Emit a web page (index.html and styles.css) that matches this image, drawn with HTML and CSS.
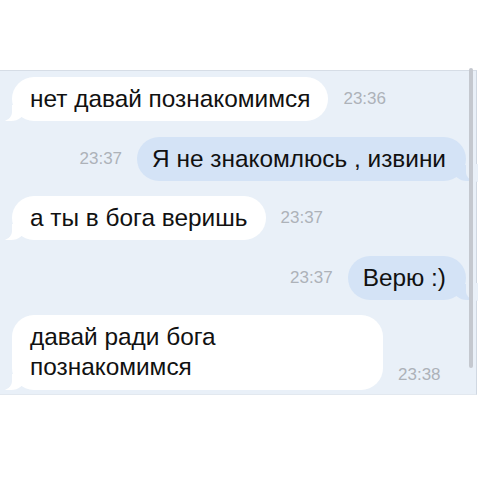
FILE: index.html
```html
<!DOCTYPE html>
<html lang="ru">
<head>
<meta charset="utf-8">
<link rel="stylesheet" href="styles.css">
</head>
<body>
<div class="page">
  <div class="panel">
    <div class="row in">
      <div class="bubble white">нет давай познакомимся</div>
      <span class="time">23:36</span>
    </div>
    <div class="row out">
      <span class="time">23:37</span>
      <div class="bubble blue">Я не знакомлюсь , извини</div>
    </div>
    <div class="row in">
      <div class="bubble white">а ты в бога веришь</div>
      <span class="time">23:37</span>
    </div>
    <div class="row out">
      <span class="time">23:37</span>
      <div class="bubble blue">Верю :)</div>
    </div>
    <div class="row in multi">
      <div class="bubble white wide">давай ради бога<br>познакомимся</div>
      <span class="time low">23:38</span>
    </div>
    <div class="scrollbar"></div>
  </div>
</div>
</body>
</html>
```
FILE: styles.css
```css
html, body {
  margin: 0;
  padding: 0;
  background: #ffffff;
}
body {
  font-family: "Liberation Sans", Arial, sans-serif;
  width: 480px;
  height: 480px;
  overflow: hidden;
}
.page {
  padding-top: 70px;
}
.panel {
  position: relative;
  width: 477px;
  height: 325px;
  box-sizing: border-box;
  background: #e9f0f8;
  border-top: 1px solid #d6dde6;
  border-right: 1px solid #d0d8e2;
  border-bottom: 1px solid #e2e8ef;
  padding: 6px 10px 0 12px;
  display: flex;
  flex-direction: column;
  gap: 15.5px;
}
.row {
  display: flex;
  align-items: center;
  gap: 15px;
}
.row.out {
  justify-content: flex-end;
}
.bubble {
  position: relative;
  font-size: 24.4px;
  line-height: 28px;
  color: #111111;
  padding: 8px 18px;
  border-radius: 22px;
}
.white {
  background: #ffffff;
}
.blue {
  background: #d4e3f6;
  padding-left: 15px;
  padding-right: 20px;
}
.white::before {
  content: "";
  position: absolute;
  left: -7px;
  bottom: 0;
  width: 20px;
  height: 16px;
  background: #ffffff;
  border-bottom-right-radius: 14px 12px;
}
.white::after {
  content: "";
  position: absolute;
  left: -12px;
  bottom: -1px;
  width: 12px;
  height: 18px;
  background: #e9f0f8;
  border-bottom-right-radius: 12px 10px;
}
.blue::before {
  content: "";
  position: absolute;
  right: -7px;
  bottom: 0;
  width: 20px;
  height: 16px;
  background: #d4e3f6;
  border-bottom-left-radius: 14px 12px;
}
.blue::after {
  content: "";
  position: absolute;
  right: -12px;
  bottom: -1px;
  width: 12px;
  height: 18px;
  background: #e9f0f8;
  border-bottom-left-radius: 12px 10px;
}
.bubble.wide {
  width: 335px;
  line-height: 30px;
  padding-top: 7px;
  padding-bottom: 8px;
}
.time {
  font-size: 17px;
  color: #adb2b9;
}
.row.multi {
  align-items: flex-end;
}
.time.low {
  margin-bottom: 5px;
}
.scrollbar {
  position: absolute;
  right: 3px;
  top: -3px;
  width: 4px;
  height: 300px;
  background: #c4c8cf;
  border-radius: 2px;
}
```
